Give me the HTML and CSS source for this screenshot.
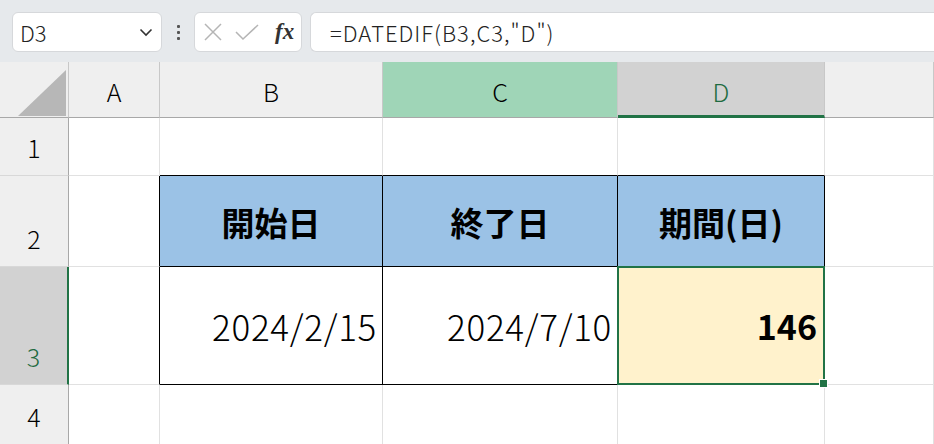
FILE: index.html
```html
<!DOCTYPE html>
<html lang="ja">
  <head>
    <meta charset="UTF-8" />
    <title>DATEDIF</title>
    <link rel="stylesheet" href="styles.css">
  </head>
  <body>
    <div class="toolbar">
      <div class="name-box">
        <span>D3</span>
        <svg class="chevron" width="14" height="10" viewBox="0 0 14 10"><path d="M1.5 2.5 L7 8 L12.5 2.5" fill="none" stroke="#333" stroke-width="1.6"/></svg>
      </div>
      <div class="dots"><i></i><i></i><i></i></div>
      <div class="fx-box">
        <svg width="20" height="20" viewBox="0 0 20 20"><path d="M2 2 L18 18 M18 2 L2 18" stroke="#b5b5b5" stroke-width="1.5"/></svg>
        <svg width="24" height="20" viewBox="0 0 24 20"><path d="M1 10 L8 17 L23 3" fill="none" stroke="#b5b5b5" stroke-width="1.5"/></svg>
        <span class="fx">fx</span>
      </div>
      <div class="formula">=DATEDIF(B3,C3,"D")</div>
    </div>

    <div class="sheet">
      <div class="corner"><div class="tri"></div></div>
      <div class="col-head">A</div>
      <div class="col-head">B</div>
      <div class="col-head active-col">C</div>
      <div class="col-head sel-col">D</div>
      <div class="col-head"></div>

      <div class="row-head">1</div>
      <div class="cell"></div>
      <div class="cell above"></div>
      <div class="cell above"></div>
      <div class="cell above"></div>
      <div class="cell"></div>

      <div class="row-head">2</div>
      <div class="cell left-of"></div>
      <div class="cell th">開始日</div>
      <div class="cell th">終了日</div>
      <div class="cell th">期間(日)</div>
      <div class="cell"></div>

      <div class="row-head sel-row">3</div>
      <div class="cell left-of"></div>
      <div class="cell td">2024/2/15</div>
      <div class="cell td">2024/7/10</div>
      <div class="cell td result">146<div class="selection"><span class="handle"></span></div></div>
      <div class="cell"></div>

      <div class="row-head">4</div>
      <div class="cell"></div>
      <div class="cell"></div>
      <div class="cell"></div>
      <div class="cell"></div>
      <div class="cell"></div>
    </div>
  </body>
</html>
```

FILE: styles.css
```css
body {
  margin: 0;
  width: 934px;
  height: 444px;
  overflow: hidden;
  font-family: "Noto Sans CJK JP", "Noto Sans", sans-serif;
  color: #000;
  background: #fff;
}
.toolbar {
  height: 62px;
  box-sizing: border-box;
  padding: 12px 0 10px 12px;
  background: #e6e9ec;
  display: flex;
  align-items: stretch;
}
.name-box {
  width: 150px;
  box-sizing: border-box;
  background: #fff;
  border: 1px solid #d6d8db;
  border-radius: 6px;
  display: flex;
  align-items: center;
  justify-content: space-between;
  padding: 0 8px 0 7px;
  font-size: 22px;
  font-weight: 300;
  color: #222;
}
.dots {
  width: 32px;
  display: flex;
  flex-direction: column;
  align-items: center;
  justify-content: center;
  gap: 3px;
}
.dots i {
  width: 3px;
  height: 3px;
  background: #555;
  border-radius: 1px;
}
.fx-box {
  width: 108px;
  box-sizing: border-box;
  background: #fff;
  border: 1px solid #d6d8db;
  border-radius: 6px;
  display: flex;
  align-items: center;
  padding: 0 6px 0 8px;
  gap: 12px;
}
.fx {
  font-family: "Liberation Serif", serif;
  font-style: italic;
  font-weight: bold;
  font-size: 23px;
  color: #333;
  margin-left: 4px;
}
.formula {
  flex: 1;
  margin-left: 8px;
  background: #fff;
  border: 1px solid #d6d8db;
  border-right: none;
  border-radius: 6px 0 0 6px;
  display: flex;
  align-items: center;
  padding-left: 19px;
  font-size: 22px;
  font-weight: 300;
  letter-spacing: 1px;
  color: #222;
}
.sheet {
  display: grid;
  grid-template-columns: 69px 91px 223px 235px 207px 1fr;
  grid-template-rows: 56px 58px 91px 118px 60px;
}
.sheet > div {
  box-sizing: border-box;
  border-right: 1px solid #e1e1e1;
  border-bottom: 1px solid #e1e1e1;
}
.corner,
.col-head,
.row-head {
  background: #efefef;
}
.sheet > .corner {
  border-right: 1px solid #c8c8c8;
  border-bottom: 1px solid #a8a8a8;
  position: relative;
}
.tri {
  position: absolute;
  left: 18px;
  top: 8px;
  width: 48px;
  height: 46px;
  background: #b7b7b7;
  clip-path: polygon(100% 0, 100% 100%, 0 100%);
}
.sheet > .col-head {
  border-right: 1px solid #c8c8c8;
  border-bottom: 1px solid #a8a8a8;
  display: flex;
  align-items: center;
  justify-content: center;
  font-size: 25px;
  font-weight: 300;
  padding-top: 2px;
}
.sheet > .active-col {
  background: #9fd5b7;
}
.sheet > .sel-col {
  background: #d2d2d2;
  color: #1e6b41;
  border-bottom: 3px solid #217346;
  padding-top: 4px;
}
.sheet > .row-head {
  border-right: 1px solid #a8a8a8;
  border-bottom: 1px solid #d8d8d8;
  display: flex;
  align-items: flex-end;
  justify-content: center;
  font-size: 25px;
  font-weight: 300;
  padding-bottom: 10px;
}
.sheet > .sel-row {
  background: #d2d2d2;
  color: #1e6b41;
  border-right: 2px solid #217346;
}
.sheet > .above {
  border-bottom: 1px solid #000;
}
.sheet > .left-of {
  border-right: 1px solid #000;
}
.sheet > .th,
.sheet > .td {
  border-right: 1px solid #000;
  border-bottom: 1px solid #000;
  display: flex;
  align-items: center;
}
.th {
  background: #9bc2e6;
  justify-content: center;
  font-size: 33px;
  font-weight: bold;
  padding-top: 2px;
}
.td {
  justify-content: flex-end;
  font-size: 35px;
  font-weight: 300;
  letter-spacing: 0.7px;
  padding-right: 5px;
}
.sheet > .result {
  position: relative;
  background: #fff2cc;
  font-weight: bold;
  font-size: 34px;
  letter-spacing: 0;
  padding-right: 7px;
}
.selection {
  position: absolute;
  left: -1px;
  top: -1px;
  right: -1px;
  bottom: -1px;
  border: 2px solid #217346;
  pointer-events: none;
}
.handle {
  position: absolute;
  right: -5px;
  bottom: -5px;
  width: 7px;
  height: 7px;
  background: #217346;
  border: 1px solid #fff;
}
```
